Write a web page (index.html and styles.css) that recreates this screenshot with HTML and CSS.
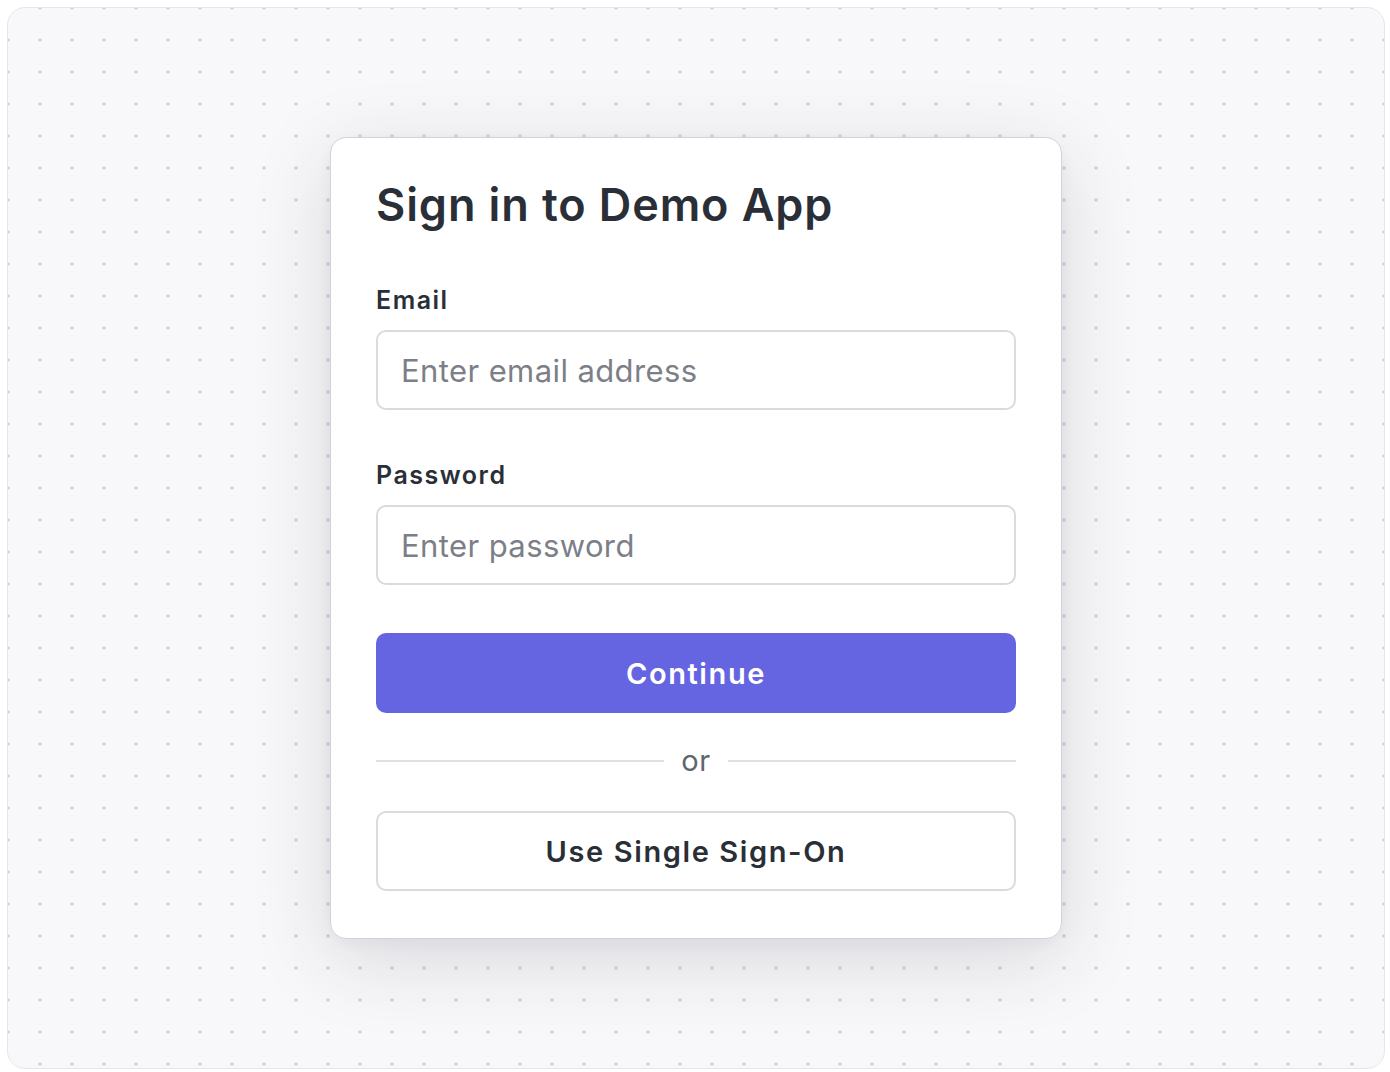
FILE: index.html
```html
<!DOCTYPE html>
<html lang="en">
<head>
<meta charset="utf-8">
<title>Sign in to Demo App</title>
<link rel="stylesheet" href="styles.css">
</head>
<body>
<div class="stage">
  <form class="card">
    <h1 class="title">Sign in to Demo App</h1>
    <label class="label" for="email">Email</label>
    <input class="field" id="email" type="email" placeholder="Enter email address">
    <label class="label label-2" for="password">Password</label>
    <input class="field" id="password" type="password" placeholder="Enter password">
    <button class="btn btn-primary" type="button">Continue</button>
    <div class="divider"><span class="rule"></span><span class="or">or</span><span class="rule"></span></div>
    <button class="btn btn-secondary" type="button">Use Single Sign-On</button>
  </form>
</div>
</body>
</html>
```
FILE: styles.css
```css
* { box-sizing: border-box; }
html, body { margin: 0; padding: 0; background: #ffffff; }
body { font-family: Inter, "Noto Sans", sans-serif; }

.stage {
  margin: 7px 5px 3px 7px;
  height: 1062px;
  border: 1px solid #e7e7eb;
  border-radius: 18px;
  background-color: #f8f8fa;
  background-image: radial-gradient(circle, #d3d3da 1.5px, transparent 1.8px);
  background-size: 32px 32px;
  background-position: -16px -16px;
  display: flex;
  align-items: center;
  justify-content: center;
}

.card {
  width: 732px;
  background: #ffffff;
  border: 1px solid #d2d3da;
  border-radius: 16px;
  padding: 41px 45px 47px;
  display: flex;
  flex-direction: column;
  box-shadow: 0 20px 80px rgba(40, 40, 60, 0.15), 0 4px 14px rgba(40, 40, 60, 0.04);
}

.title {
  margin: 0;
  font-size: 45px;
  line-height: 52px;
  font-weight: 600;
  letter-spacing: 0.9px;
  color: #2a2f37;
}

.label {
  margin-top: 54px;
  font-size: 25px;
  line-height: 30px;
  font-weight: 600;
  letter-spacing: 1.5px;
  color: #2a2f37;
}
.label-2 { margin-top: 50px; }

.field {
  margin-top: 15px;
  width: 100%;
  height: 80px;
  border: 2px solid #dadae0;
  border-radius: 10px;
  padding: 0 23px;
  font-family: inherit;
  font-size: 31px;
  letter-spacing: 0.4px;
  color: #2a2f37;
  background: #ffffff;
  outline: none;
}
.field::placeholder { color: #7c7f87; }

.btn {
  width: 100%;
  height: 80px;
  border-radius: 10px;
  font-family: inherit;
  font-size: 29px;
  font-weight: 600;
  letter-spacing: 1.6px;
  cursor: pointer;
}
.btn-primary {
  margin-top: 48px;
  border: none;
  background: #6665e1;
  color: #ffffff;
}
.btn-secondary {
  margin-top: 32px;
  border: 2px solid #dadae0;
  background: #ffffff;
  color: #2a2f37;
}

.divider {
  margin-top: 30px;
  height: 36px;
  display: flex;
  align-items: center;
  gap: 17px;
}
.rule {
  flex: 1;
  height: 2px;
  background: #dfdfe4;
}
.or {
  font-size: 29px;
  line-height: 36px;
  letter-spacing: 0.5px;
  color: #60646c;
}
```
